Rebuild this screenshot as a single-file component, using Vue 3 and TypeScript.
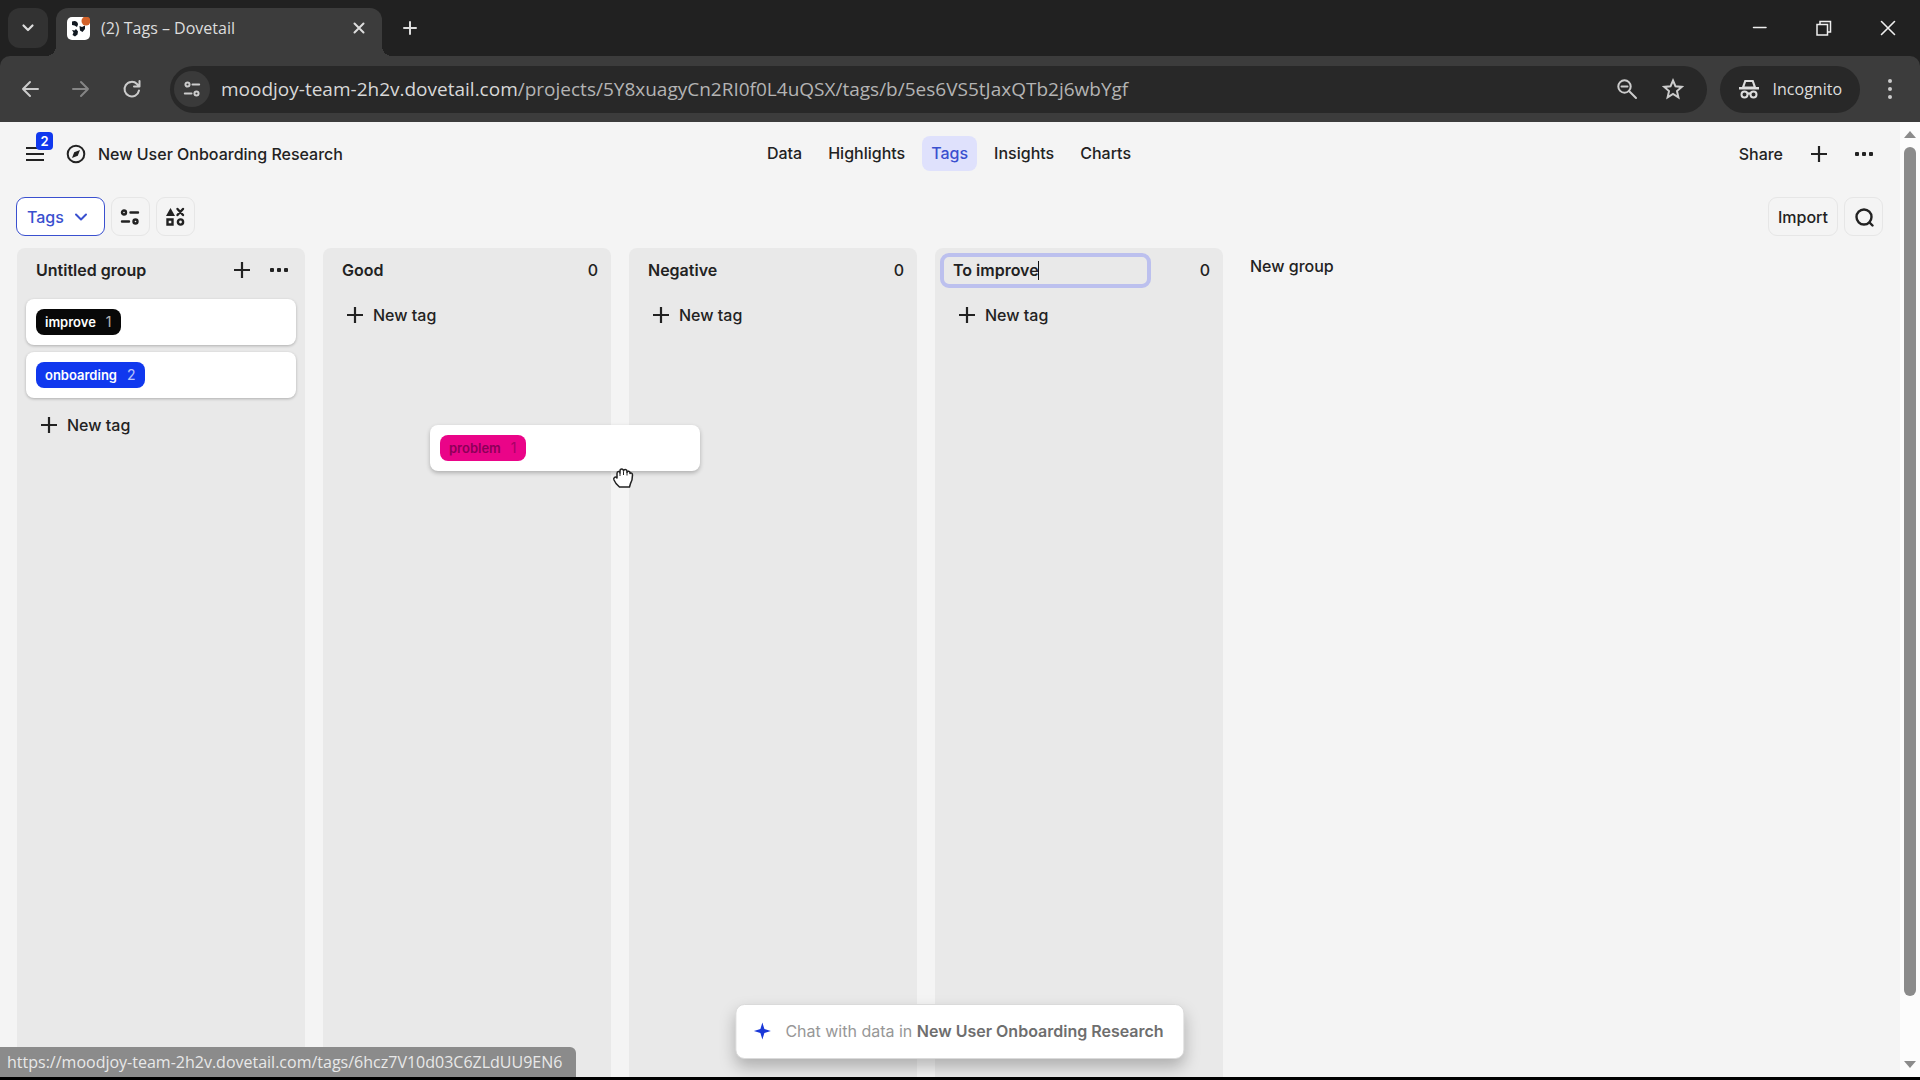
<script setup lang="ts">
import { ref } from 'vue'

interface Tag {
  name: string
  count: number
  color: string
}
interface Group {
  title: string
  tags: Tag[]
  state: 'hovered' | 'idle' | 'editing'
}

const url = { host: 'moodjoy-team-2h2v.dovetail.com', path: '/projects/5Y8xuagyCn2RI0f0L4uQSX/tags/b/5es6VS5tJaxQTb2j6wbYgf' }
const project = 'New User Onboarding Research'
const sections = ['Data', 'Highlights', 'Tags', 'Insights', 'Charts']
const groupName = ref('To improve')
const groups: Group[] = [
  {
    title: 'Untitled group',
    state: 'hovered',
    tags: [
      { name: 'improve', count: 1, color: '#080808' },
      { name: 'onboarding', count: 2, color: '#1038ee' },
    ],
  },
  { title: 'Good', state: 'idle', tags: [] },
  { title: 'Negative', state: 'idle', tags: [] },
  { title: 'To improve', state: 'editing', tags: [] },
]
</script>

<template>
  <div class="window">
    <header class="tabstrip">
      <button class="tab-search" aria-label="Search tabs">
        <svg width="14" height="14" viewBox="0 0 14 14" class="line"><path d="M2.5 4.5 7 9l4.500-4.500" stroke-width="2.200" /></svg>
      </button>
      <div class="tab">
        <svg width="23" height="23" viewBox="0 0 23 23" aria-hidden="true">
          <rect width="23" height="23" rx="5" fill="#fff" />
          <path d="M5 4.500C8 3 11 4.500 11 7.500L10 10 7.500 8.500 5 8zM12.500 9 15 10l3-1.500V12l-2.500 3-2.500-1.500zM5 13l2.500.5L9 12l2 2.500-.5 3L8 19.500 5.500 18l1-2.500z" fill="#111820" />
          <circle cx="19" cy="4" r="4.500" fill="#d2622a" />
        </svg>
        <span class="tab-title">(2) Tags – Dovetail</span>
        <button class="bare" aria-label="Close tab">
          <svg width="14" height="14" viewBox="0 0 14 14" class="line"><path d="m2.500 2.500 9 9M11.500 2.500l-9 9" stroke-width="2" /></svg>
        </button>
      </div>
      <button class="bare new-tab" aria-label="New tab">
        <svg width="16" height="16" viewBox="0 0 16 16" class="line"><path d="M8 2v12M2 8h12" stroke-width="2" /></svg>
      </button>
      <div class="window-controls">
        <button class="bare" aria-label="Minimize"><svg width="16" height="16" viewBox="0 0 16 16" class="line"><path d="M1.500 7.500h12.500" stroke-width="1.500" /></svg></button>
        <button class="bare" aria-label="Restore"><svg width="16" height="16" viewBox="0 0 16 16" class="line"><path d="M1 4.500h10.500V15H1zM4 4V1.500h10.500V12h-2.500" stroke-width="1.500" stroke-linejoin="miter" /></svg></button>
        <button class="bare" aria-label="Close"><svg width="16" height="16" viewBox="0 0 16 16" class="line"><path d="m1.500 1.500 13 13m0-13-13 13" stroke-width="1.600" /></svg></button>
      </div>
    </header>

    <div class="toolbar">
      <div class="history">
        <button class="bare" aria-label="Back"><svg width="20" height="20" viewBox="0 0 20 20" class="line"><path d="M18 10H3m7-7-7 7 7 7" stroke-width="2" /></svg></button>
        <button class="bare dim" aria-label="Forward"><svg width="20" height="20" viewBox="0 0 20 20" class="line"><path d="M2 10h15m-7-7 7 7-7 7" stroke-width="2" /></svg></button>
        <button class="bare" aria-label="Reload"><svg width="20" height="20" viewBox="0 0 20 20" class="line"><path d="M17 11.500a7.300 7.300 0 1 1-2-6.500l2.500 2.500M17.500 2v5.500H12" stroke-width="2" /></svg></button>
      </div>
      <div class="omnibox">
        <button class="site-info" aria-label="View site information">
          <svg width="18" height="18" viewBox="0 0 20 20" class="line"><circle cx="5" cy="5" r="2.300" stroke-width="2.200" /><path d="M10.500 5H18M2 15h7.500" stroke-width="2.200" /><circle cx="15" cy="15" r="2.300" stroke-width="2.200" /></svg>
        </button>
        <span class="url">{{ url.host }}<span class="url-path">{{ url.path }}</span></span>
        <button class="bare" aria-label="Zoom">
          <svg width="22" height="22" viewBox="0 0 22 22" class="line"><circle cx="8.500" cy="8.500" r="6.200" stroke-width="2" /><path d="m13 13 7 7M5.500 8.500h6" stroke-width="2" /></svg>
        </button>
        <button class="bare" aria-label="Bookmark this tab">
          <svg width="22" height="22" viewBox="0 0 22 22" class="line"><path d="m11 2.500 2.500 5.800 6.200.6-4.700 4.200 1.400 6.200L11 16l-5.400 3.300L7 13.100 2.300 8.900l6.200-.6z" stroke-width="2" stroke-linejoin="miter" /></svg>
        </button>
      </div>
      <button class="incognito">
        <svg width="22" height="20" viewBox="0 0 22 20" aria-hidden="true">
          <path d="M1 10.500h20v-2.500h-3L15.500 1H6.500L4 8H1z" fill="#ddd" />
          <path d="M8 3h6l1.500 4.500h-9z" fill="#282828" />
          <g fill="none" stroke="#ddd" stroke-width="2"><circle cx="6.500" cy="15.500" r="3" /><circle cx="15.500" cy="15.500" r="3" /><path d="M9.500 15c1-.8 2-.8 3 0" /></g>
        </svg>
        Incognito
      </button>
      <button class="bare" aria-label="Browser menu"><svg width="8" height="22" viewBox="0 0 8 22" fill="#ccc"><circle cx="4" cy="3" r="2" /><circle cx="4" cy="11" r="2" /><circle cx="4" cy="19" r="2" /></svg></button>
    </div>

    <div class="viewport">
      <main class="app">
        <div class="app-header">
          <div class="project">
            <button class="plain menu" aria-label="Menu">
              <svg width="20" height="18" viewBox="0 0 20 18" class="line"><path d="M1 3h18M1 9h18M1 15h18" stroke-width="2.200" stroke-linecap="butt" /></svg>
              <span class="badge">2</span>
            </button>
            <svg width="20" height="20" viewBox="0 0 20 20" aria-hidden="true"><circle cx="10" cy="10" r="8.300" fill="none" stroke="#222" stroke-width="2" /><path d="m14 6-2.200 5.800L6 14l2.200-5.800z" fill="#222" /></svg>
            <a href="#" class="project-name">{{ project }}</a>
          </div>
          <nav class="sections">
            <a v-for="section in sections" :key="section" href="#" :class="{ active: section === 'Tags' }">{{ section }}</a>
          </nav>
          <div class="actions">
            <button class="plain">Share</button>
            <button class="plain" aria-label="Add"><svg width="18" height="18" viewBox="0 0 18 18" class="line"><path d="M9 1v16M1 9h16" stroke-width="2.200" stroke-linecap="butt" /></svg></button>
            <button class="plain" aria-label="More"><svg width="18" height="4" viewBox="0 0 18 4" fill="currentColor"><rect width="4" height="4" rx="1" /><rect x="7" width="4" height="4" rx="1" /><rect x="14" width="4" height="4" rx="1" /></svg></button>
          </div>
        </div>

        <div class="filters">
          <button class="outlined primary">Tags
            <svg width="14" height="14" viewBox="0 0 14 14" class="line"><path d="m2 4.500 5 5 5-5" stroke-width="2" /></svg>
          </button>
          <button class="outlined square" aria-label="Display options">
            <svg width="20" height="20" viewBox="0 0 20 20" class="line"><circle cx="4" cy="5.500" r="2" stroke-width="2.400" /><path d="M10.500 5.500H18M2 14.500h7" stroke-width="2.400" /><circle cx="15.500" cy="14.500" r="2" stroke-width="2.400" /></svg>
          </button>
          <button class="outlined square" aria-label="Group by">
            <svg width="20" height="20" viewBox="0 0 20 20" class="line"><path d="M5.500 1 10 9H1z" fill="currentColor" stroke="none" /><path d="m12.500 2 5.500 6m0-6-5.500 6M2.500 12.500h5v5h-5z" stroke-width="2.400" stroke-linejoin="miter" /><circle cx="15.500" cy="15" r="2.600" stroke-width="2.400" /></svg>
          </button>
          <span class="spacer"></span>
          <button class="outlined import">Import</button>
          <button class="outlined square" aria-label="Search">
            <svg width="20" height="20" viewBox="0 0 20 20" class="line"><circle cx="10" cy="10" r="7.500" stroke-width="2.400" /><path d="m15.500 15.500 3 3" stroke-width="2.400" /></svg>
          </button>
        </div>

        <div class="board">
          <section v-for="group in groups" :key="group.title" class="group">
            <div class="group-head">
              <label v-if="group.state === 'editing'" class="rename">
                <input v-model="groupName" type="text" aria-label="Group name" />
                <span class="caret"></span>
              </label>
              <h2 v-else>{{ group.title }}</h2>
              <span v-if="group.state === 'hovered'" class="group-actions">
                <button class="plain" aria-label="Add tag"><svg width="16" height="16" viewBox="0 0 16 16" class="line"><path d="M8 0v16M0 8h16" stroke-width="2.200" stroke-linecap="butt" /></svg></button>
                <button class="plain" aria-label="Group menu"><svg width="18" height="4" viewBox="0 0 18 4" fill="currentColor"><rect width="4" height="4" rx="1" /><rect x="7" width="4" height="4" rx="1" /><rect x="14" width="4" height="4" rx="1" /></svg></button>
              </span>
              <span v-else class="total">0</span>
            </div>
            <div v-for="tag in group.tags" :key="tag.name" class="card">
              <a href="#" class="tag" :style="{ background: tag.color }">{{ tag.name }} <span class="tag-count">{{ tag.count }}</span></a>
            </div>
            <button class="plain new">
              <svg width="16" height="16" viewBox="0 0 16 16" class="line"><path d="M8 0v16M0 8h16" stroke-width="2.200" stroke-linecap="butt" /></svg>
              New tag
            </button>
          </section>
          <button class="plain new-group">New group</button>
        </div>
      </main>
      <div class="scrollbar" aria-hidden="true">
        <svg width="12" height="7" viewBox="0 0 12 7"><path d="M6 0l6 7H0z" fill="#8b8b8b" /></svg>
        <span class="track"><span class="thumb"></span></span>
        <svg width="12" height="7" viewBox="0 0 12 7"><path d="M6 7l6-7H0z" fill="#8b8b8b" /></svg>
      </div>
    </div>

    <div class="card dragged"><a href="#" class="tag">problem <span class="tag-count">1</span></a></div>
    <svg class="hand" width="22" height="22" viewBox="0 0 22 22" aria-hidden="true">
      <path d="M5 11V6.500C5 4 8 4 8 6V4c0-2.500 3.500-2.500 3.500-.2V4c0-2 3.500-2 3.500.5v.8c.5-1.800 3-1.300 3 .5v.7c1-1 2.500-.3 2.500 1.500 0 4-.5 6-2 8.500L17.500 20H7.500L4 16.500 2 13c-1-2.500 1.500-4 3-2z" fill="#fff" stroke="#222" stroke-width="1.500" stroke-linejoin="round" />
      <path d="M8 6v3M11.500 4.500V8M15 5v3.500" fill="none" stroke="#222" stroke-width="1" />
    </svg>

    <button class="chat">
      <svg width="18" height="18" viewBox="0 0 18 18" aria-hidden="true"><path d="M9 .5 11 7l6.500 2L11 11l-2 6.500L7 11 .5 9 7 7z" fill="#1a38d8" /></svg>
      <span>Chat with data in <strong>{{ project }}</strong></span>
    </button>
    <div class="status">https://moodjoy-team-2h2v.dovetail.com/tags/6hcz7V10d03C6ZLdUU9EN6</div>
  </div>
</template>

<style>
body {
  margin: 0;
  background: #000;
}
</style>

<style scoped>
* {
  box-sizing: border-box;
}
.window {
  position: relative;
  display: flex;
  flex-direction: column;
  min-height: 100vh;
  border-bottom: 3px solid #000;
  background: #212121;
  font-family: Inter, "Liberation Sans", sans-serif;
  font-size: 16px;
  color: #222;
}
button {
  font: inherit;
  color: inherit;
  border: 0;
  padding: 0;
  background: none;
  cursor: pointer;
}
a {
  color: inherit;
  text-decoration: none;
}
svg {
  display: block;
  flex: none;
}
.line {
  fill: none;
  stroke: currentColor;
  stroke-linecap: round;
  stroke-linejoin: round;
}
.tabstrip,
.toolbar,
.status {
  font-family: "Open Sans", "Noto Sans", sans-serif;
}
.tabstrip {
  display: flex;
  align-items: center;
  height: 56px;
  padding-left: 8px;
  color: #ddd;
}
.tab-search {
  display: flex;
  align-items: center;
  justify-content: center;
  width: 40px;
  height: 40px;
  border-radius: 12px;
  background: #323232;
}
.tab {
  position: relative;
  display: flex;
  align-items: center;
  align-self: flex-end;
  width: 326px;
  height: 48px;
  margin-left: 8px;
  padding: 0 16px 8px 11px;
  border-radius: 12px 12px 0 0;
  background: #3c3c3c;
}
.tab::before,
.tab::after {
  content: "";
  position: absolute;
  bottom: 0;
  width: 10px;
  height: 10px;
}
.tab::before {
  right: 100%;
  background: radial-gradient(circle at 0 0, transparent 10px, #3c3c3c 10px);
}
.tab::after {
  left: 100%;
  background: radial-gradient(circle at 100% 0, transparent 10px, #3c3c3c 10px);
}
.tab-title {
  flex: 1;
  margin-left: 11px;
  font-size: 16px;
  line-height: 24px;
}
.new-tab {
  margin-left: 20px;
}
.window-controls {
  display: flex;
  gap: 48px;
  margin-left: auto;
  padding-right: 24px;
  color: #eee;
}
.toolbar {
  display: flex;
  align-items: center;
  height: 66px;
  padding: 0 26px 0 20px;
  border-radius: 10px 10px 0 0;
  background: #3c3c3c;
  color: #ccc;
}
.history {
  display: flex;
  gap: 31px;
  margin-right: 28px;
}
.dim {
  color: #858585;
}
.omnibox {
  flex: 1;
  display: flex;
  align-items: center;
  gap: 24px;
  height: 47px;
  padding: 0 23px 0 4px;
  border-radius: 24px;
  background: #282828;
}
.site-info {
  display: flex;
  align-items: center;
  justify-content: center;
  width: 36px;
  height: 36px;
  border-radius: 18px;
  background: #3a3a3a;
}
.url {
  flex: 1;
  margin-left: -13px;
  font-size: 19px;
  line-height: 28px;
  white-space: nowrap;
  color: #d8d8d8;
}
.url-path {
  color: #b4b4b4;
}
.incognito {
  display: flex;
  align-items: center;
  gap: 13px;
  height: 47px;
  margin: 0 26px 0 13px;
  padding: 0 18px;
  border-radius: 24px;
  background: #282828;
  color: #ddd;
}
.viewport {
  flex: 1;
  display: flex;
  background: #f4f4f4;
}
.app {
  flex: 1;
  display: flex;
  flex-direction: column;
  min-width: 0;
}
.app-header {
  display: grid;
  grid-template-columns: 1fr auto 1fr;
  align-items: center;
  height: 63px;
  padding: 0 27px 0 25px;
  font-size: 16px;
  font-weight: 500;
}
.project,
.actions,
.sections,
.filters,
.group-actions {
  display: flex;
  align-items: center;
}
.project {
  gap: 12px;
}
.project-name,
.sections a,
.actions {
  line-height: 20px;
}
.menu {
  position: relative;
  margin-right: 9px;
}
.badge {
  position: absolute;
  left: 11px;
  top: -13px;
  width: 17px;
  height: 18px;
  border-radius: 4px;
  background: #1038ee;
  color: #fff;
  font-size: 13px;
  font-weight: 600;
  line-height: 18px;
}
.sections {
  gap: 8px;
}
.sections a {
  padding: 7px 9px 8px;
  border-radius: 8px;
}
.sections .active {
  background: #dfe1fc;
  color: #3a50cf;
}
.actions {
  justify-content: flex-end;
  gap: 27px;
}
.filters {
  gap: 6px;
  margin-top: 12px;
  padding: 0 17px 0 16px;
  font-weight: 500;
}
.outlined {
  display: flex;
  align-items: center;
  justify-content: center;
  height: 39px;
  border: 1px solid #e6e6e6;
  border-radius: 9px;
}
.primary {
  gap: 10px;
  padding: 0 16px 0 10px;
  border-color: #3a50cf;
  background: #fff;
  color: #3a50cf;
}
.square {
  width: 39px;
}
.import {
  padding: 0 9px;
}
.spacer {
  flex: 1;
}
.board {
  flex: 1;
  display: flex;
  align-items: stretch;
  gap: 18px;
  padding: 12px 17px 0;
}
.group {
  flex: none;
  width: 288px;
  padding: 0 9px;
  border-radius: 8px 8px 0 0;
  background: #e9e9e9;
}
.group-head {
  display: flex;
  align-items: center;
  justify-content: space-between;
  height: 44px;
  margin-bottom: 7px;
}
h2 {
  margin: 0 0 0 10px;
  font-size: 16px;
  font-weight: 600;
  line-height: 20px;
}
.group-actions {
  gap: 20px;
  margin-right: 8px;
}
.total {
  margin-right: 4px;
  font-weight: 500;
}
.rename {
  position: relative;
  display: block;
  margin-left: -4px;
}
.rename input {
  display: block;
  width: 211px;
  height: 35px;
  padding: 0 9px;
  border: 4px solid #bcc0ee;
  border-radius: 9px;
  outline: 0;
  background: #e9e9e9;
  font: inherit;
  font-weight: 600;
  color: inherit;
}
.caret {
  position: absolute;
  left: 98px;
  top: 8px;
  width: 1px;
  height: 19px;
  background: #111;
}
.card {
  display: flex;
  align-items: center;
  height: 46px;
  margin-bottom: 7px;
  padding: 0 10px;
  border-radius: 8px;
  background: #fff;
  box-shadow: 0 1px 3px rgba(0, 0, 0, 0.25);
}
.tag {
  display: flex;
  gap: 10px;
  padding: 0 9px;
  border-radius: 8px;
  font-size: 13px;
  font-weight: 600;
  line-height: 26px;
  color: #fff;
}
.tag-count {
  font-size: 14px;
  font-weight: 400;
  opacity: 0.7;
}
.new {
  display: flex;
  align-items: center;
  gap: 10px;
  height: 32px;
  padding-left: 15px;
  font-weight: 500;
}
.card + .new {
  margin-top: 11px;
}
.new-group {
  align-self: flex-start;
  margin-left: 9px;
  padding-top: 8px;
  font-weight: 500;
  line-height: 20px;
}
.scrollbar {
  display: flex;
  flex-direction: column;
  align-items: center;
  width: 20px;
  padding: 9px 0;
  background: #fcfcfc;
}
.track {
  flex: 1;
  padding: 9px 0 65px;
}
.thumb {
  display: block;
  width: 12px;
  height: 100%;
  border-radius: 6px;
  background: #8b8b8b;
}
.dragged {
  position: absolute;
  left: 430px;
  top: 425px;
  width: 270px;
  box-shadow: 0 2px 4px rgba(0, 0, 0, 0.25);
}
.dragged .tag {
  background: #ea0488;
  color: #8c0058;
}
.hand {
  position: absolute;
  left: 612px;
  top: 467px;
}
.chat {
  position: absolute;
  left: 50%;
  bottom: 18px;
  transform: translateX(-50%);
  display: flex;
  align-items: center;
  gap: 14px;
  height: 55px;
  padding: 0 20px 2px 17px;
  border: 1px solid #dadada;
  border-radius: 9px;
  background: #fff;
  box-shadow: 0 8px 16px rgba(0, 0, 0, 0.25);
  white-space: nowrap;
  color: #979797;
}
.chat strong {
  font-weight: 600;
  color: #6e6e6e;
}
.status {
  position: absolute;
  left: 0;
  bottom: 0;
  padding: 0 14px 0 7px;
  border-radius: 0 6px 0 0;
  background: #8b8b8b;
  color: #e8e8e8;
  font-size: 16px;
  line-height: 30px;
}
</style>
